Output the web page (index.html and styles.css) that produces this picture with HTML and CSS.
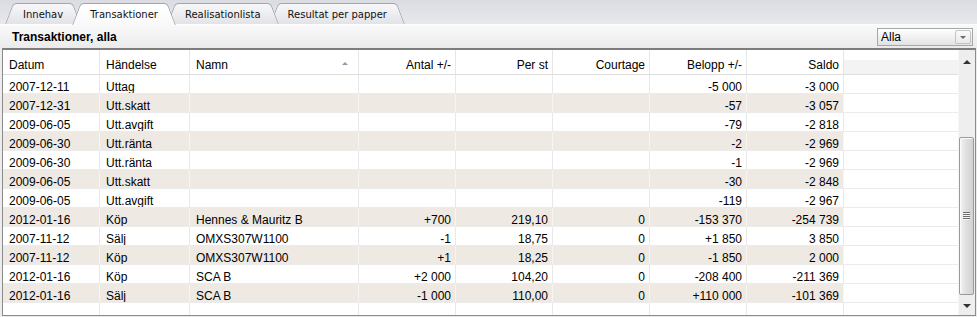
FILE: index.html
```html
<!DOCTYPE html>
<html lang="sv">
<head>
    <meta charset="UTF-8">
    <meta name="viewport" content="width=device-width, initial-scale=1.0">
    <title>Transaktioner</title>
    <link rel="stylesheet" href="styles.css">
</head>
<body>
    <div class="tabs">
        <div class="tab t1">Innehav</div>
        <div class="tab active">Transaktioner</div>
        <div class="tab t3">Realisationlista</div>
        <div class="tab t4">Resultat per papper</div>
    </div>

    <div class="titlebar">
        <span class="title">Transaktioner, alla</span>
        <div class="combo">
            <span class="combo-text">Alla</span>
            <span class="combo-btn"><i class="tri-down"></i></span>
        </div>
    </div>

    <div class="grid">
        <div class="grid-body">
            <div class="row head">
                <div>Datum</div>
                <div>Händelse</div>
                <div class="sorted"><i class="sort-up"></i>Namn</div>
                <div class="num">Antal +/-</div>
                <div class="num">Per st</div>
                <div class="num">Courtage</div>
                <div class="num">Belopp +/-</div>
                <div class="num">Saldo</div>
                <div class="fill"></div>
            </div>
            <div class="row">
                <div>2007-12-11</div><div>Uttag</div><div></div><div class="num"></div><div class="num"></div><div class="num"></div><div class="num">-5&nbsp;000</div><div class="num">-3&nbsp;000</div><div class="fill"></div>
            </div>
            <div class="row alt">
                <div>2007-12-31</div><div>Utt.skatt</div><div></div><div class="num"></div><div class="num"></div><div class="num"></div><div class="num">-57</div><div class="num">-3&nbsp;057</div><div class="fill"></div>
            </div>
            <div class="row">
                <div>2009-06-05</div><div>Utt.avgift</div><div></div><div class="num"></div><div class="num"></div><div class="num"></div><div class="num">-79</div><div class="num">-2&nbsp;818</div><div class="fill"></div>
            </div>
            <div class="row alt">
                <div>2009-06-30</div><div>Utt.ränta</div><div></div><div class="num"></div><div class="num"></div><div class="num"></div><div class="num">-2</div><div class="num">-2&nbsp;969</div><div class="fill"></div>
            </div>
            <div class="row">
                <div>2009-06-30</div><div>Utt.ränta</div><div></div><div class="num"></div><div class="num"></div><div class="num"></div><div class="num">-1</div><div class="num">-2&nbsp;969</div><div class="fill"></div>
            </div>
            <div class="row alt">
                <div>2009-06-05</div><div>Utt.skatt</div><div></div><div class="num"></div><div class="num"></div><div class="num"></div><div class="num">-30</div><div class="num">-2&nbsp;848</div><div class="fill"></div>
            </div>
            <div class="row">
                <div>2009-06-05</div><div>Utt.avgift</div><div></div><div class="num"></div><div class="num"></div><div class="num"></div><div class="num">-119</div><div class="num">-2&nbsp;967</div><div class="fill"></div>
            </div>
            <div class="row alt">
                <div>2012-01-16</div><div>Köp</div><div>Hennes &amp; Mauritz B</div><div class="num">+700</div><div class="num">219,10</div><div class="num">0</div><div class="num">-153&nbsp;370</div><div class="num">-254&nbsp;739</div><div class="fill"></div>
            </div>
            <div class="row">
                <div>2007-11-12</div><div>Sälj</div><div>OMXS307W1100</div><div class="num">-1</div><div class="num">18,75</div><div class="num">0</div><div class="num">+1&nbsp;850</div><div class="num">3&nbsp;850</div><div class="fill"></div>
            </div>
            <div class="row alt">
                <div>2007-11-12</div><div>Köp</div><div>OMXS307W1100</div><div class="num">+1</div><div class="num">18,25</div><div class="num">0</div><div class="num">-1&nbsp;850</div><div class="num">2&nbsp;000</div><div class="fill"></div>
            </div>
            <div class="row">
                <div>2012-01-16</div><div>Köp</div><div>SCA B</div><div class="num">+2&nbsp;000</div><div class="num">104,20</div><div class="num">0</div><div class="num">-208&nbsp;400</div><div class="num">-211&nbsp;369</div><div class="fill"></div>
            </div>
            <div class="row alt">
                <div>2012-01-16</div><div>Sälj</div><div>SCA B</div><div class="num">-1&nbsp;000</div><div class="num">110,00</div><div class="num">0</div><div class="num">+110&nbsp;000</div><div class="num">-101&nbsp;369</div><div class="fill"></div>
            </div>
            <div class="row">
                <div></div><div></div><div></div><div></div><div></div><div></div><div></div><div></div><div class="fill"></div>
            </div>
        </div>

        <div class="vscroll">
            <div class="sb-btn sb-up"><i class="tri-up"></i></div>
            <div class="sb-track">
                <div class="sb-thumb"><i class="grip"></i></div>
            </div>
            <div class="sb-btn sb-down"><i class="tri-down dark"></i></div>
        </div>
    </div>
</body>
</html>
```

FILE: styles.css
```css
body {
    margin: 0;
    padding: 0;
    background-color: #ececec;
    font-family: "Liberation Sans", Arial, sans-serif;
    font-size: 12px;
    color: #000;
    overflow: hidden;
}

/* tab strip */
.tabs {
    position: relative;
    z-index: 2;
    height: 24px;
    display: flex;
    align-items: flex-end;
    padding-left: 5px;
    background: linear-gradient(#dadce2, #e7e8ec);
}
.tab {
    position: relative;
    z-index: 1;
    height: 21px;
    line-height: 23px;
    padding: 0 18px;
    margin-right: -9px;
    font-family: "DejaVu Sans", sans-serif;
    font-size: 10px;
    color: #111;
}
.tab::before,
.tab::after {
    content: "";
    position: absolute;
    top: 0;
    bottom: 0;
    width: 60%;
    border: 1px solid #a2a5ac;
    border-bottom: none;
    background: linear-gradient(#f8f8fa, #e2e3e7);
    z-index: -1;
}
.tab::before {
    left: 0;
    border-right: none;
    border-radius: 4px 0 0 0;
    transform: skewX(-21deg);
    transform-origin: bottom left;
}
.tab::after {
    right: 0;
    border-left: none;
    border-radius: 0 4px 0 0;
    transform: skewX(21deg);
    transform-origin: bottom right;
}
.t1 { z-index: 4; }
.t3 { z-index: 3; }
.t4 { z-index: 2; }
.tab.active {
    z-index: 5;
    height: 22px;
    margin-bottom: -1px;
}
.tab.active::before,
.tab.active::after {
    background: linear-gradient(#ffffff, #f9f9f9);
}

/* title bar */
.titlebar {
    height: 23px;
    border-top: 1px solid #fdfdfd;
    display: flex;
    align-items: center;
    justify-content: space-between;
    padding: 0 4px 0 12px;
    background: linear-gradient(#f9f9f9, #ebebeb);
}
.title {
    font-weight: bold;
    font-size: 12px;
}
.combo {
    width: 94px;
    height: 16px;
    border: 1px solid #a7a7a7;
    display: flex;
    align-items: center;
    justify-content: space-between;
    background: linear-gradient(#ffffff, #f1f1f1 50%, #e2e2e2);
    margin-top: 1px;
}
.combo-text {
    padding-left: 3px;
    font-size: 12px;
    line-height: 16px;
}
.combo-btn {
    width: 14px;
    height: 12px;
    margin-right: 1px;
    border: 1px solid #c3c3c3;
    border-radius: 2px;
    background: linear-gradient(#fbfbfb, #e9e9e9);
    display: flex;
    align-items: center;
    justify-content: center;
}
.tri-down {
    width: 0;
    height: 0;
    border-left: 3px solid transparent;
    border-right: 3px solid transparent;
    border-top: 3px solid #6a6a6a;
}
.tri-down.dark {
    border-left-width: 4px;
    border-right-width: 4px;
    border-top: 4px solid #333;
}
.tri-up {
    width: 0;
    height: 0;
    border-left: 4px solid transparent;
    border-right: 4px solid transparent;
    border-bottom: 4px solid #333;
}

/* data grid */
.grid {
    display: flex;
    height: 265px;
    margin: 0 1px 0 2px;
    border: 1px solid #8b8b8b;
    border-top: 2px solid #7d7d7d;
    background-color: #fff;
}
.grid-body {
    flex: 1;
    overflow: hidden;
}
.row {
    display: grid;
    grid-template-columns: 97px 90px 169px 97px 97px 97px 97px 97px 1fr;
}
.row > div {
    box-sizing: border-box;
    height: 19px;
    line-height: 24px;
    padding: 0 5px 0 6px;
    border-right: 1px solid #e8e8e8;
    border-bottom: 1px solid #ebebeb;
    white-space: nowrap;
    overflow: hidden;
}
.row > .num {
    text-align: right;
    padding: 0 4px 0 4px;
}
.row > .fill {
    border-right: none;
}
.row.alt > div:not(.fill) {
    background-color: #efe9e3;
    border-right-color: #f7f4f1;
}
.row.head > div {
    height: 25px;
    line-height: 30px;
    border-bottom-color: #dedede;
    border-right-color: #e6e6e6;
}
.row.head > .fill {
    background: linear-gradient(#ffffff 10px, #f3f3f3 10px);
}
.row.head > .sorted {
    padding-right: 10px;
}
.sort-up {
    float: right;
    width: 0;
    height: 0;
    margin-top: 12px;
    border-left: 3px solid transparent;
    border-right: 3px solid transparent;
    border-bottom: 3px solid #8e9aa8;
}

/* vertical scrollbar */
.vscroll {
    width: 17px;
    display: flex;
    flex-direction: column;
    background-color: #eeeeee;
    border-left: 1px solid #f6f6f6;
    box-sizing: border-box;
}
.sb-btn {
    display: flex;
    align-items: center;
    justify-content: center;
}
.sb-up {
    height: 24px;
}
.sb-down {
    height: 18px;
}
.sb-track {
    flex: 1;
    display: flex;
    flex-direction: column;
    justify-content: flex-end;
    padding-bottom: 2px;
}
.sb-thumb {
    height: 156px;
    margin: 0 1px 0 0;
    border: 1px solid #9a9a9a;
    border-radius: 2px;
    background: linear-gradient(90deg, #f4f4f4, #e0e0e0 45%, #d2d2d2);
    box-shadow: inset 1px 1px 0 #fbfbfb;
    display: flex;
    align-items: center;
    justify-content: center;
}
.grip {
    width: 7px;
    height: 8px;
    background: repeating-linear-gradient(#6f6f6f 0 1px, #f4f4f4 1px 2px);
}
```
